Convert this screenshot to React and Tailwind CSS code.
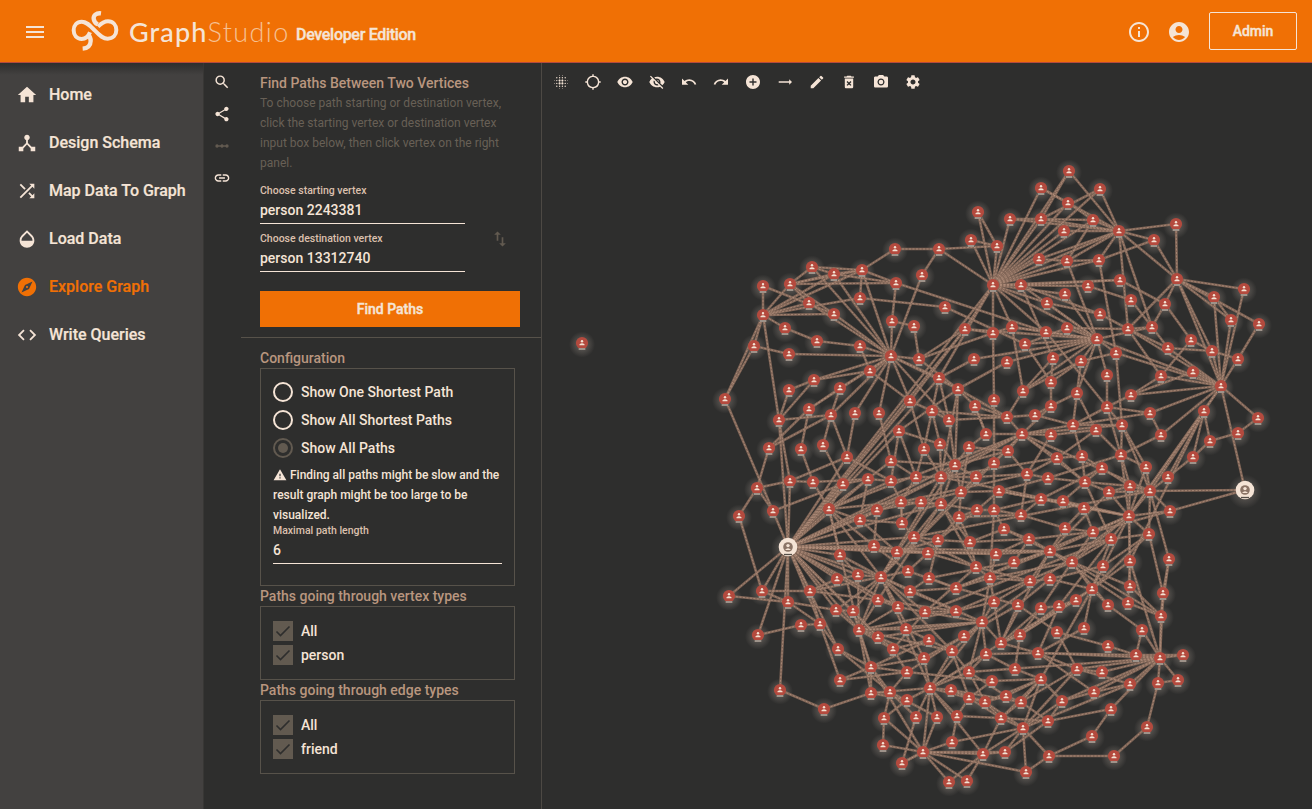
import React from "react";
import {
  MdMenu, MdHome, MdDeviceHub, MdShuffle, MdOpacity, MdExplore, MdCode, MdSearch, MdShare,
  MdLinearScale, MdLink, MdSwapVert, MdBlurOn, MdGpsNotFixed, MdVisibility, MdVisibilityOff,
  MdUndo, MdRedo, MdAddCircle, MdTrendingFlat, MdEdit, MdDeleteForever, MdLocalSee, MdSettings,
  MdInfoOutline, MdAccountCircle, MdWarning,
} from "react-icons/md";

const NODES = {
  1: [978, 212], 2: [895, 249], 3: [939, 249], 4: [971, 240], 5: [997, 246], 6: [993, 285], 7: [812, 267], 8: [834, 274],
  9: [862, 270], 10: [790, 284], 11: [763, 286], 12: [896, 283], 13: [922, 275], 14: [809, 303], 15: [860, 298], 16: [763, 315],
  17: [834, 314], 18: [945, 307], 19: [785, 328], 20: [892, 321], 21: [914, 326], 22: [754, 346], 23: [817, 341], 24: [789, 354],
  25: [860, 346], 26: [891, 356], 27: [919, 359], 28: [965, 329], 29: [993, 333], 30: [974, 359], 31: [1007, 362], 32: [870, 371],
  33: [814, 380], 34: [789, 390], 35: [840, 388], 36: [725, 399], 37: [939, 378], 38: [958, 389], 39: [910, 401], 40: [809, 409],
  41: [779, 420], 42: [831, 415], 43: [855, 413], 44: [879, 413], 45: [932, 411], 46: [949, 420], 47: [975, 406], 48: [994, 400],
  49: [1007, 417], 50: [899, 431], 51: [986, 434], 52: [769, 448], 53: [801, 449], 54: [823, 445], 55: [847, 457], 56: [924, 449],
  57: [940, 444], 58: [969, 447], 59: [1008, 451], 60: [891, 461], 61: [955, 465], 62: [994, 463], 63: [1069, 171], 64: [1041, 188],
  65: [1100, 189], 66: [1068, 203], 67: [1010, 219], 68: [1041, 219], 69: [1093, 220], 70: [1064, 231], 71: [1119, 231], 72: [1176, 224],
  73: [1154, 240], 74: [1039, 259], 75: [1067, 261], 76: [1099, 260], 77: [1177, 279], 78: [1021, 285], 79: [1088, 286], 80: [1120, 280],
  81: [1065, 294], 82: [1047, 303], 83: [1131, 300], 84: [1165, 304], 85: [1100, 314], 86: [1244, 289], 87: [1214, 297], 88: [1231, 320],
  89: [1259, 324], 90: [1012, 327], 91: [1046, 332], 92: [1067, 328], 93: [1128, 329], 94: [1152, 327], 95: [1097, 339], 96: [1191, 340],
  97: [1025, 344], 98: [1116, 353], 99: [1168, 348], 100: [1212, 351], 101: [1238, 359], 102: [1053, 358], 103: [1081, 361], 104: [1107, 375],
  105: [1161, 376], 106: [1193, 372], 107: [1221, 386], 108: [1051, 382], 109: [1023, 391], 110: [1077, 393], 111: [1131, 395], 112: [1051, 406],
  113: [1107, 407], 114: [1035, 415], 115: [1204, 411], 116: [1150, 413], 117: [1258, 418], 118: [1073, 425], 119: [1096, 430], 120: [1122, 425],
  121: [1022, 434], 122: [1051, 435], 123: [1161, 435], 124: [1238, 433], 125: [1210, 441], 126: [1082, 456], 127: [1057, 458], 128: [1121, 455],
  129: [1193, 457], 130: [1146, 467], 131: [1102, 468], 132: [757, 488], 133: [790, 481], 134: [813, 482], 135: [843, 484], 136: [868, 479],
  137: [891, 481], 138: [916, 477], 139: [941, 477], 140: [976, 477], 141: [961, 492], 142: [999, 491], 143: [739, 516], 144: [773, 511],
  145: [829, 509], 146: [877, 510], 147: [901, 502], 148: [921, 502], 149: [941, 504], 150: [860, 520], 151: [902, 523], 152: [959, 517],
  153: [977, 510], 154: [994, 510], 155: [1004, 529], 156: [788, 547], 157: [874, 546], 158: [840, 555], 159: [897, 552], 160: [914, 537],
  161: [938, 540], 162: [928, 553], 163: [970, 542], 164: [996, 554], 165: [837, 579], 166: [858, 575], 167: [881, 577], 168: [908, 571],
  169: [929, 578], 170: [976, 567], 171: [990, 578], 172: [762, 591], 173: [810, 591], 174: [729, 596], 175: [788, 602], 176: [878, 600],
  177: [910, 591], 178: [956, 588], 179: [994, 602], 180: [898, 607], 181: [836, 610], 182: [853, 611], 183: [956, 611], 184: [925, 612],
  185: [758, 635], 186: [801, 625], 187: [820, 624], 188: [859, 630], 189: [982, 622], 190: [906, 629], 191: [878, 637], 192: [964, 636],
  193: [838, 649], 194: [893, 649], 195: [929, 640], 196: [952, 651], 197: [986, 654], 198: [1001, 643], 199: [924, 658], 200: [871, 667],
  201: [840, 680], 202: [907, 672], 203: [969, 672], 204: [992, 681], 205: [780, 690], 206: [871, 693], 207: [890, 692], 208: [930, 688],
  209: [951, 690], 210: [907, 700], 211: [969, 698], 212: [985, 702], 213: [1006, 696], 214: [824, 709], 215: [884, 718], 216: [916, 717],
  217: [937, 717], 218: [957, 716], 219: [1001, 718], 220: [883, 745], 221: [952, 742], 222: [923, 752], 223: [983, 754], 224: [1005, 752],
  225: [902, 763], 226: [949, 782], 227: [967, 781], 228: [1027, 474], 229: [1048, 478], 230: [1085, 482], 231: [1109, 492], 232: [1130, 486],
  233: [1150, 491], 234: [1168, 477], 235: [1245, 490], 236: [1041, 499], 237: [1063, 501], 238: [1084, 508], 239: [1021, 515], 240: [1129, 516],
  241: [1170, 511], 242: [1065, 528], 243: [1093, 532], 244: [1111, 539], 245: [1149, 534], 246: [1029, 539], 247: [1050, 551], 248: [1014, 562],
  249: [1072, 562], 250: [1103, 566], 251: [1130, 561], 252: [1169, 559], 253: [1030, 581], 254: [1050, 579], 255: [1092, 589], 256: [1130, 586],
  257: [1163, 593], 258: [1076, 600], 259: [1018, 605], 260: [1041, 608], 261: [1059, 606], 262: [1108, 605], 263: [1128, 603], 264: [1161, 616],
  265: [1142, 630], 266: [1020, 635], 267: [1057, 632], 268: [1084, 628], 269: [1108, 646], 270: [1038, 653], 271: [1136, 655], 272: [1160, 658],
  273: [1183, 655], 274: [1015, 669], 275: [1077, 669], 276: [1102, 672], 277: [1041, 679], 278: [1130, 684], 279: [1158, 683], 280: [1178, 680],
  281: [1094, 692], 283: [1021, 702], 284: [1062, 701], 285: [1111, 709], 286: [1048, 721], 287: [1147, 727], 288: [1023, 728], 289: [1092, 736],
  290: [1049, 756], 291: [1114, 756], 292: [1026, 772], 293: [582, 343],
};

const ENDPOINTS = [156, 235];

// Adjacency: each vertex followed by the vertices it links to.
const LINKS = {
  1: [5, 6], 2: [3, 9], 3: [13, 6, 5], 4: [5, 6], 5: [6],
  6: [67, 64, 68, 66, 63, 65, 69, 70, 71, 74, 75, 76, 78, 79, 80, 81, 28, 29, 90, 91, 37, 82, 95, 156],
  7: [8, 9, 10, 26], 8: [9, 10, 12, 16, 26], 9: [10, 12, 15, 16, 26], 10: [12, 14, 17, 16], 11: [16, 17], 12: [20, 91],
  13: [26], 14: [16, 26], 15: [16, 18], 16: [22, 19, 36, 41, 17], 17: [26], 18: [97], 19: [23], 20: [26, 21], 21: [27],
  22: [24, 36], 23: [25], 24: [26], 25: [26, 32], 26: [32, 33, 35, 40, 42, 43, 44, 37, 39, 46, 27, 38],
  27: [28, 38], 28: [29, 156, 95, 39], 29: [48, 90, 27], 30: [37, 95], 31: [38, 95], 32: [33, 39], 33: [34, 41], 34: [41],
  35: [42, 40], 36: [144], 37: [38, 46, 45, 156], 38: [47, 61, 139, 50, 49], 39: [45, 156, 56], 40: [53, 52], 41: [42, 156, 133],
  42: [54, 55], 43: [55], 44: [60], 45: [56, 57, 46, 49], 46: [61, 49], 47: [49, 51], 48: [62], 49: [121, 114],
  50: [57, 138, 156, 137], 51: [58, 47, 121], 52: [42, 132], 53: [134], 54: [135], 55: [137, 133, 156], 56: [138, 139],
  57: [139, 61], 58: [61, 59, 141], 59: [61, 121, 228], 60: [138, 145, 61], 61: [139, 141, 140, 149, 167, 156], 62: [121, 154, 140],
  63: [68, 71], 64: [66, 71], 65: [68, 71], 66: [69], 67: [68, 71], 68: [69, 71], 69: [71, 75], 70: [71], 71: [72, 73, 74, 75, 76, 77, 93, 94],
  72: [77], 73: [77, 76], 74: [75], 75: [95, 76], 76: [98], 77: [86, 87, 89, 88, 84, 93, 100, 107], 78: [80, 95, 102], 79: [83],
  80: [84], 81: [95], 82: [85, 95], 83: [94], 84: [94, 96], 85: [93, 78], 86: [107], 87: [107, 88], 88: [107], 89: [101],
  90: [91, 95, 109], 91: [95, 113], 92: [93, 95], 93: [94, 107, 99, 105], 94: [99, 95], 95: [97, 102, 103, 98, 104, 110, 107, 109],
  96: [105, 100], 97: [92, 108], 98: [103, 120, 107], 99: [107, 100], 100: [107, 101], 101: [107], 102: [109, 108], 103: [108, 110, 109],
  104: [113], 105: [107, 111], 106: [107, 111], 107: [115, 117, 111, 116, 123, 235, 240], 108: [112], 109: [49], 110: [112, 119, 118],
  111: [113], 112: [114, 121], 113: [118, 116, 120, 232], 114: [118], 115: [129, 125, 240, 233, 234, 251], 116: [123, 118], 117: [124], 118: [120, 126, 121],
  119: [127, 128], 120: [128, 121, 130, 233], 121: [122, 127, 61, 139, 230, 233, 167, 145], 122: [228, 119], 123: [128], 124: [125], 125: [129],
  126: [127, 230, 131], 127: [139, 230, 228], 128: [130, 229, 240], 129: [234], 130: [240, 233], 131: [230, 232, 236],
  132: [143, 133, 144], 133: [156, 134], 134: [136, 145], 135: [145, 144, 136], 136: [137, 150], 137: [138, 145, 147], 138: [139, 147],
  139: [149, 140, 146, 156, 167, 240], 140: [228, 141], 141: [142, 152, 148, 167], 142: [236, 153, 240], 143: [172], 144: [156], 145: [147, 156, 157, 150, 158, 188, 167],
  146: [148, 157, 150], 147: [149, 151], 148: [149, 151], 149: [160, 163, 153, 170, 176, 156], 150: [151, 159], 151: [160, 147], 152: [153, 163, 161],
  153: [154, 161], 154: [155, 239, 236, 171], 155: [163, 246, 249],
  156: [135, 136, 146, 147, 157, 159, 160, 158, 167, 166, 165, 180, 176, 182, 181, 187, 193, 173, 205, 172, 174, 185, 175, 188, 162, 191, 164],
  157: [162, 168], 158: [166, 167], 159: [161, 167, 164], 160: [167, 170, 161], 161: [163, 169], 162: [247, 170], 163: [246, 170],
  164: [246, 247, 171], 165: [166, 173], 166: [167, 188], 167: [168, 177, 180, 189, 184, 188, 181, 199, 182, 196, 208, 173], 168: [178, 162],
  169: [178, 248, 177], 170: [171, 253, 184], 171: [253, 179, 189, 249], 172: [173, 175], 173: [187, 176], 174: [175], 175: [187, 181],
  176: [180, 188, 183], 177: [178, 183], 178: [171, 259, 247], 179: [253, 198, 189], 180: [184, 188], 181: [182, 188], 182: [191, 200],
  183: [184, 179, 188], 184: [189, 194], 185: [186], 186: [187], 187: [193, 201], 188: [190, 191, 194, 200, 189, 206, 196], 189: [192, 196, 191, 203, 197, 198, 208, 240],
  190: [189, 195], 191: [194, 199], 192: [199, 202], 193: [200, 207], 194: [202, 195], 195: [196, 200], 196: [208, 203, 211], 197: [208, 203],
  198: [270, 266, 247, 255, 208], 199: [208, 200], 200: [201, 207, 206, 202, 222], 201: [202], 202: [207, 204], 203: [208, 212, 213, 272], 204: [277, 211],
  205: [214], 206: [210, 207], 207: [215, 216, 217], 208: [210, 209, 211, 216, 217, 206, 223, 222, 218], 209: [211, 212], 210: [215],
  211: [212, 219, 218], 212: [213, 219, 277, 288], 213: [277, 283], 214: [206], 215: [220, 222], 216: [225], 217: [222], 218: [221, 219],
  219: [283, 223, 288], 220: [222], 221: [222, 288], 222: [223, 224, 225, 226, 227, 292], 223: [224, 226, 227], 224: [288, 286],
  225: [222], 228: [229, 239, 147], 229: [230, 142], 230: [231, 237, 232, 244], 231: [240, 232, 233, 247], 232: [233, 240], 233: [240, 241, 235, 234, 245, 252, 160],
  235: [241], 236: [237, 238, 239], 237: [240, 238], 238: [240, 242, 243], 239: [242, 152], 240: [241, 245, 251, 244, 249, 247, 243, 256, 255, 178, 142],
  241: [243], 242: [243, 247], 243: [246, 249], 244: [249, 255, 245, 247, 261, 184], 245: [250, 255, 257], 246: [247, 248], 247: [249, 263, 253, 156],
  248: [247], 249: [255, 262, 260, 264, 183], 250: [255, 254], 251: [255, 272, 263], 252: [257, 264], 253: [254], 254: [259, 255], 255: [262, 258, 268, 277, 266],
  256: [264, 249], 257: [272, 264], 258: [266, 261, 198], 259: [267, 198, 192], 260: [266, 261, 198], 261: [266, 270], 262: [265], 263: [264], 264: [272],
  265: [272, 271], 266: [274, 198], 267: [269, 275], 268: [270], 269: [271], 270: [271, 272, 275, 281, 197], 271: [272, 273],
  272: [273, 279, 280, 278, 281, 275, 276, 285, 284], 274: [277, 197], 275: [276, 278, 288, 283], 277: [283, 284, 219, 288], 278: [281, 288],
  279: [280, 287], 281: [284], 283: [286, 277, 209], 284: [286, 288], 285: [286, 289], 286: [219], 287: [291], 288: [290, 292, 223], 289: [290], 290: [291, 292],
};

const EDGES = Object.entries(LINKS).flatMap(([from, list]) => list.map((to) => [NODES[from], NODES[to]]));

function Vertex({ x, y }) {
  return (
    <g transform={`translate(${x} ${y})`}>
      <circle r="6.1" fill="#b44a3e" />
      <circle cy="-1.8" r="1.2" fill="#f3e2d3" />
      <path d="M-2.5 2.2V1.2Q0-.9 2.5 1.2V2.2Z" fill="#f3e2d3" />
      <path d="M-4 5H4V7H-4Z" fill="#383431" />
      <path d="M-3.5 6H3.5" stroke="#f3e2d3" strokeWidth="1.1" />
    </g>
  );
}

function Endpoint({ x, y }) {
  return (
    <g transform={`translate(${x} ${y})`}>
      <circle r="9.3" fill="#f5e4d6" />
      <circle r="4.8" fill="#8b7466" />
      <circle cy="-1.4" r="1.7" fill="#f5e4d6" />
      <path d="M-3 3Q0-.3 3 3Z" fill="#f5e4d6" />
      <path d="M-4 7.5H4" stroke="#544d47" strokeWidth="1.3" />
    </g>
  );
}

function Graph() {
  const points = Object.entries(NODES);
  return (
    <svg className="block h-[707px] w-[770px]" viewBox="542 102 770 707">
      <defs>
        <radialGradient id="glow">
          <stop offset="0.4" stopColor="#77706a" stopOpacity="0.5" />
          <stop offset="1" stopColor="#77706a" stopOpacity="0" />
        </radialGradient>
      </defs>
      {points.map(([id, [x, y]]) => (
        <circle key={id} cx={x} cy={y + 1.5} r={ENDPOINTS.includes(+id) ? 17 : 13} fill="url(#glow)" />
      ))}
      {EDGES.map(([a, b], i) => (
        <line key={i} x1={a[0]} y1={a[1]} x2={b[0]} y2={b[1]} stroke="#86695a" strokeWidth="2.6" strokeOpacity="0.92" />
      ))}
      {EDGES.map(([a, b], i) => (
        <line key={i} x1={a[0]} y1={a[1]} x2={b[0]} y2={b[1]} stroke="#b8937f" strokeWidth="0.7" strokeDasharray="2 1.5" />
      ))}
      {points.map(([id, [x, y]]) =>
        ENDPOINTS.includes(+id) ? <Endpoint key={id} x={x} y={y} /> : <Vertex key={id} x={x} y={y} />
      )}
    </svg>
  );
}

function Logo() {
  return (
    <svg className="h-[44px] w-[50px] shrink-0" viewBox="208 28 150 132" fill="none" stroke="#f5e4d6" strokeWidth="12">
      <path d="M268 98C263 111 254 118 243 118C228 118 219 107 219 92C219 76 229 66 243 66C258 66 267 77 283 93C299 110 308 117 321 117C337 117 347 106 347 91C347 76 337 65 322 65C310 65 303 70 292 81" />
      <path d="M301 41C286 39 278 48 279 57C280 65 284 70 291 74" strokeWidth="13" />
      <path d="M246 147C261 146 270 137 270 124C270 115 267 109 262 104" strokeWidth="13" />
    </svg>
  );
}

const NAV = [
  [MdHome, "Home"], [MdDeviceHub, "Design Schema"], [MdShuffle, "Map Data To Graph"],
  [MdOpacity, "Load Data"], [MdExplore, "Explore Graph"], [MdCode, "Write Queries"],
];
const TOOLS = [
  MdBlurOn, MdGpsNotFixed, MdVisibility, MdVisibilityOff, MdUndo, MdRedo, MdAddCircle,
  MdTrendingFlat, MdEdit, MdDeleteForever, MdLocalSee, MdSettings,
];

function Field({ label, value, className }) {
  return (
    <div className={className}>
      <div className="h-5 pt-px text-[10.5px] leading-5 text-[#dcc0ad]">{label}</div>
      <div className="h-6 border-b border-[#f5e4d6] text-sm leading-5">{value}</div>
    </div>
  );
}

function Radio({ label, checked }) {
  return (
    <div className="flex h-7 items-center gap-2 text-sm">
      <span className={`flex size-5 items-center justify-center rounded-full border-2 ${checked ? "border-[#625a50]" : "border-[#f5e4d6]"}`}>
        {checked && <span className="size-2.5 rounded-full bg-[#625a50]" />}
      </span>
      {label}
    </div>
  );
}

function CheckGroup({ title, items }) {
  return (
    <section>
      <h2 className="h-5 text-sm leading-5 text-[#b9967f]">{title}</h2>
      <div className="h-[74px] w-[255px] border border-[#57524a] pt-3 pl-3">
        {items.map((item) => (
          <div key={item} className="flex h-6 items-center gap-2 text-sm">
            <span className="flex size-5 items-center justify-center bg-[#625a50]">
              <svg viewBox="0 0 20 20" className="size-5" fill="none" stroke="#2e2e2d" strokeWidth="1.6">
                <path d="M3.5 10.5L7.5 14.5L16.5 5.5" />
              </svg>
            </span>
            {item}
          </div>
        ))}
      </div>
    </section>
  );
}

export default function App() {
  return (
    <div className="flex h-[809px] w-[1312px] flex-col overflow-hidden bg-[#2e2e2d] font-['Roboto',sans-serif] font-medium text-[#f5e4d6]">
      <header className="flex h-[63px] shrink-0 items-center border-b border-[#b44a3e] bg-[#f07005] pr-[15px] pl-[23px]">
        <MdMenu className="mt-[2px] size-6" />
        <div className="w-[23px]" />
        <Logo />
        <div className="ml-[9px] flex w-[167px] items-baseline font-['Lato',sans-serif] text-[27px] leading-none">
          <span className="font-medium tracking-[1.1px]">Graph</span>
          <span className="font-light tracking-[1.4px] text-[#f6c193]">Studio</span>
        </div>
        <div className="mt-[8px] text-base tracking-[-0.3px] whitespace-nowrap [-webkit-text-stroke:0.4px_#f5e4d6]">Developer Edition</div>
        <div className="ml-auto flex items-center">
          <MdInfoOutline className="mt-px size-6" />
          <MdAccountCircle className="mt-px ml-4 size-6" />
          <div className="ml-[18px] flex h-[38px] w-[88px] items-center justify-center rounded-[2px] border border-[#f5e4d6] text-sm [-webkit-text-stroke:0.4px_#f5e4d6]">Admin</div>
        </div>
      </header>
      <div className="flex min-h-0 flex-1">
        <nav className="w-[204px] shrink-0 border-r border-[#383735] bg-linear-to-b from-[#2e2e2d] to-[#434140] to-[12px] pt-2">
          {NAV.map(([Icon, label]) => (
            <div key={label} className={`flex h-12 items-center gap-[11px] pl-[16px] text-base [-webkit-text-stroke:0.2px] ${label === "Explore Graph" ? "text-[#f07005]" : ""}`}>
              <Icon className="size-[22px]" />
              {label}
            </div>
          ))}
        </nav>
        <div className="flex w-[37px] shrink-0 flex-col items-center gap-4 pt-[11px] pr-[2px]">
          <MdSearch className="size-4 scale-110" />
          <MdShare className="size-4 scale-110" />
          <MdLinearScale className="size-4 text-[#625a50]" />
          <MdLink className="size-4 scale-110" />
        </div>
        <aside className="w-[301px] shrink-0 border-r border-[#4d4944]">
          <div className="h-[275px] border-b border-[#57524a] pt-[10px] pl-[19px]">
            <h1 className="h-5 text-sm leading-5 text-[#b9967f]">Find Paths Between Two Vertices</h1>
            <p className="h-[87px] text-xs leading-5 font-normal text-[#686056]">
              To choose path starting or destination vertex,<br />click the starting vertex or destination vertex<br />
              input box below, then click vertex on the right<br />panel.
            </p>
            <div className="flex items-center">
              <div className="w-[205px]">
                <Field label="Choose starting vertex" value="person 2243381" />
                <Field className="mt-1" label="Choose destination vertex" value="person 13312740" />
              </div>
              <MdSwapVert className="mt-[25px] ml-[25px] size-5 text-[#625a50]" />
            </div>
            <button className="mt-[19px] block h-9 w-[260px] bg-[#f07005] text-sm [-webkit-text-stroke:0.4px_#f5e4d6]">Find Paths</button>
          </div>
          <div className="pt-[10px] pl-[19px]">
            <h2 className="h-5 text-sm leading-5 text-[#b9967f]">Configuration</h2>
            <div className="h-[218px] w-[255px] border border-[#57524a] pt-[9px] pr-3 pl-3">
              <Radio label="Show One Shortest Path" />
              <Radio label="Show All Shortest Paths" />
              <Radio label="Show All Paths" checked />
              <p className="mt-[3px] h-[55px] text-xs leading-5 whitespace-nowrap">
                <MdWarning className="inline size-[14px] align-[-2.5px]" /> Finding all paths might be slow and the<br />
                result graph might be too large to be<br />visualized.
              </p>
              <Field label="Maximal path length" value="6" />
            </div>
            <CheckGroup title="Paths going through vertex types" items={["All", "person"]} />
            <CheckGroup title="Paths going through edge types" items={["All", "friend"]} />
          </div>
        </aside>
        <main className="flex min-w-0 flex-1 flex-col">
          <div className="flex h-[39px] shrink-0 items-center gap-4 pb-px pl-[11px]">
            {TOOLS.map((Icon, i) => (
              <Icon key={i} className="size-4 scale-105" />
            ))}
          </div>
          <Graph />
        </main>
      </div>
    </div>
  );
}
